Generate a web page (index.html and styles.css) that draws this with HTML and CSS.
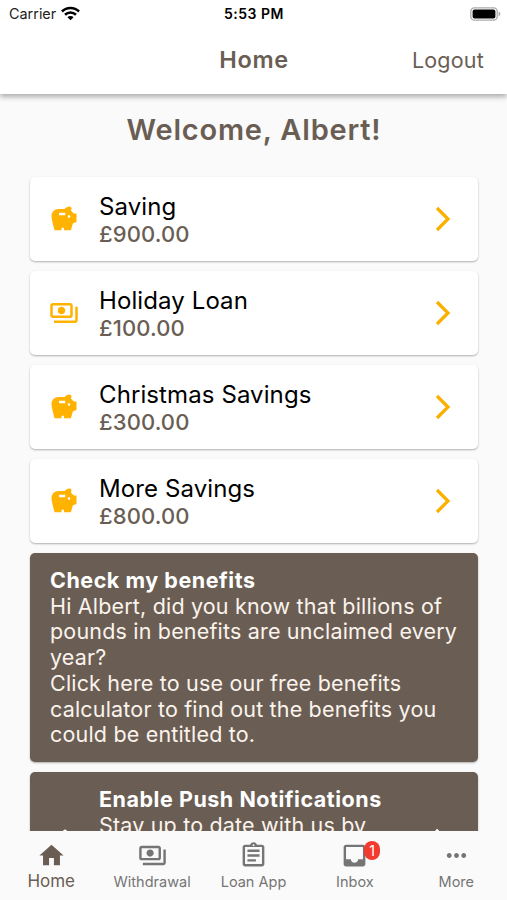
FILE: index.html
```html
<!DOCTYPE html>
<html lang="en">
<head>
<meta charset="utf-8">
<title>Home</title>
<link rel="stylesheet" href="styles.css">
</head>
<body>
<svg class="defs" aria-hidden="true">
  <symbol id="savings" viewBox="0 0 24 24"><path d="M19.83 7.5l-2.27-2.27c.07-.42.18-.81.32-1.15.08-.18.12-.37.12-.58 0-.83-.67-1.5-1.5-1.5-1.64 0-3.09.79-4 2h-5C4.46 4 2 6.46 2 9.5S4.5 21 4.5 21H10v-2h2v2h5.5l1.68-5.59 2.82-.94V7.5h-2.17zM13 9H8V7h5v2zm3 2c-.55 0-1-.45-1-1s.45-1 1-1 1 .45 1 1-.45 1-1 1z"/></symbol>
  <symbol id="payments" viewBox="0 0 24 24"><path d="M19 14V6c0-1.1-.9-2-2-2H3c-1.1 0-2 .9-2 2v8c0 1.1.9 2 2 2h14c1.1 0 2-.9 2-2zm-2 0H3V6h14v8zm-7-7c-1.66 0-3 1.34-3 3s1.34 3 3 3 3-1.34 3-3-1.34-3-3-3zm13 0v11c0 1.1-.9 2-2 2H4v-2h17V7h2z"/></symbol>
  <symbol id="chevron" viewBox="0 0 16 26"><path d="M2 2l11 11L2 24" fill="none" stroke="currentColor" stroke-width="3.2"/></symbol>
</svg>
<div class="phone">
  <header class="appbar">
    <div class="status">
      <div class="carrier"><span>Carrier</span>
        <svg class="wifi" viewBox="0 0 18 14" fill="none" stroke="#000" stroke-width="2.4"><path d="M.9 5.1a11.5 11.5 0 0 1 16.2 0M3.8 8.2a7.4 7.4 0 0 1 10.4 0"/><path d="M9 13.5L6.1 10.6a4.1 4.1 0 0 1 5.8 0z" fill="#000" stroke="none"/></svg>
      </div>
      <div class="time">5:53 PM</div>
      <svg class="battery" viewBox="0 0 31 14"><rect x=".8" y=".8" width="26.4" height="12.4" rx="3.6" fill="#fff" stroke="#aaa" stroke-width="1.3"/><rect x="2.6" y="2.5" width="22.8" height="9" rx="2" fill="#000"/><path d="M28.6 4.6c2.4 1 2.4 3.8 0 4.8z" fill="#aaa"/></svg>
    </div>
    <div class="toolbar"><span></span><h1>Home</h1><a class="logout">Logout</a></div>
  </header>
  <main class="content">
    <h2>Welcome, Albert!</h2>
    <section class="card account"><svg class="icon"><use href="#savings"/></svg><div class="info"><div class="name">Saving</div><div class="amount">£900.00</div></div><svg class="chevron"><use href="#chevron"/></svg></section>
    <section class="card account"><svg class="icon"><use href="#payments"/></svg><div class="info"><div class="name">Holiday Loan</div><div class="amount">£100.00</div></div><svg class="chevron"><use href="#chevron"/></svg></section>
    <section class="card account"><svg class="icon"><use href="#savings"/></svg><div class="info"><div class="name">Christmas Savings</div><div class="amount">£300.00</div></div><svg class="chevron"><use href="#chevron"/></svg></section>
    <section class="card account"><svg class="icon"><use href="#savings"/></svg><div class="info"><div class="name">More Savings</div><div class="amount">£800.00</div></div><svg class="chevron"><use href="#chevron"/></svg></section>
    <section class="card notice">
      <h3>Check my benefits</h3>
      <p>Hi Albert, did you know that billions of<br>pounds in benefits are unclaimed every<br>year?<br>Click here to use our free benefits<br>calculator to find out the benefits you<br>could be entitled to.</p>
    </section>
    <section class="card notice push">
      <svg class="bell" viewBox="0 0 30 30"><circle cx="15" cy="2.5" r="2"/></svg>
      <div class="pushtext"><h3>Enable Push Notifications</h3><p>Stay up to date with us by</p></div>
      <svg class="chevron light"><use href="#chevron"/></svg>
    </section>
  </main>
  <nav class="tabs">
    <a class="tab active"><svg viewBox="0 0 24 24"><path d="M10 20v-6h4v6h5v-8h3L12 3 2 12h3v8z"/></svg><span>Home</span></a>
    <a class="tab"><svg viewBox="0 0 24 24"><use href="#payments"/></svg><span>Withdrawal</span></a>
    <a class="tab"><svg viewBox="0 0 24 24"><path d="M7 15h7v2H7zm0-4h10v2H7zm0-4h10v2H7zm12-4h-4.18C14.4 1.84 13.3 1 12 1s-2.4.84-2.82 2H5c-1.1 0-2 .9-2 2v14c0 1.1.9 2 2 2h14c1.1 0 2-.9 2-2V5c0-1.1-.9-2-2-2zm-7-.25c.41 0 .75.34.75.75s-.34.75-.75.75-.75-.34-.75-.75.34-.75.75-.75zM19 19H5V5h14v14z"/></svg><span>Loan App</span></a>
    <a class="tab"><svg viewBox="0 0 24 24"><path d="M19 3H4.99c-1.11 0-1.98.89-1.98 2L3 19c0 1.1.88 2 1.99 2H19c1.1 0 2-.9 2-2V5c0-1.11-.9-2-2-2zm0 12h-4c0 1.66-1.35 3-3 3s-3-1.34-3-3H4.99V5H19v10z"/></svg><span>Inbox</span><b class="badge">1</b></a>
    <a class="tab"><svg viewBox="0 0 24 24"><path d="M6 10c-1.1 0-2 .9-2 2s.9 2 2 2 2-.9 2-2-.9-2-2-2zm12 0c-1.1 0-2 .9-2 2s.9 2 2 2 2-.9 2-2-.9-2-2-2zm-6 0c-1.1 0-2 .9-2 2s.9 2 2 2 2-.9 2-2-.9-2-2-2z"/></svg><span>More</span></a>
  </nav>
</div>
</body>
</html>
```
FILE: styles.css
```css
* { box-sizing: border-box; }
body { margin: 0; background: #fafafa; font-family: Inter, "Liberation Sans", sans-serif; color: #6a5e54; }
h1, h2, h3, p { margin: 0; }
.defs { display: none; }
.phone { height: 900px; display: flex; flex-direction: column; overflow: hidden; }
.appbar { position: relative; z-index: 1; flex: none; height: 94px; background: #fff; box-shadow: 0 3px 5px rgba(0,0,0,.3); }
.status { height: 27px; padding: 0 6px 0 9px; display: grid; grid-template-columns: 1fr auto 1fr; align-items: center; color: #000; }
.carrier { display: flex; align-items: center; gap: 5px; font-size: 14.4px; color: #222; }
.wifi { width: 19px; height: 15px; }
.time { font-size: 14px; font-weight: 600; letter-spacing: .5px; margin-right: 2px; }
.battery { width: 31px; height: 14px; justify-self: end; }
.toolbar { height: 65px; padding: 0 23px; display: grid; grid-template-columns: 1fr auto 1fr; align-items: center; }
h1 { font-size: 23.5px; font-weight: 600; letter-spacing: .7px; margin-right: -1px; }
.logout { justify-self: end; font-size: 21.5px; letter-spacing: .2px; }
.content { flex: 1; min-height: 0; overflow: hidden; padding: 17px 29px 0 30px; display: flex; flex-direction: column; gap: 10px; }
h2 { flex: none; height: 56px; line-height: 38px; font-size: 29px; font-weight: 600; letter-spacing: .8px; text-align: center; }
.card { flex: none; border-radius: 5px; box-shadow: 0 1px 2px rgba(0,0,0,.3); }
.account { height: 84px; padding: 0 27px 0 20px; display: flex; align-items: center; background: #fff; }
.icon { width: 30px; height: 30px; margin-left: -1px; fill: #ffb300; }
.info { flex: 1; margin-left: 20px; padding-top: 3px; line-height: 28px; }
.name { color: #000; font-size: 24px; letter-spacing: .1px; }
.amount { margin-top: -1px; padding-bottom: 1px; font-size: 22px; font-weight: 500; letter-spacing: .1px; }
.chevron { width: 16px; height: 26px; color: #fbb000; }
.notice { height: 209px; padding: 15px 20px; background: #6a5e54; color: #fbf3ec; font-size: 21.5px; line-height: 25.7px; letter-spacing: .18px; white-space: nowrap; }
h3 { font-size: 21.5px; font-weight: 700; letter-spacing: .53px; color: #fff; }
.push { display: flex; }
.bell { width: 30px; height: 30px; margin: 42px 0 0; fill: #fff; }
.pushtext { flex: 1; margin-left: 19px; }
.light { margin: 41px 8px 0 0; color: #fff; }
.tabs { flex: none; height: 69px; display: grid; grid-template-columns: repeat(5, 1fr); background: #fafafa; }
.tab { position: relative; display: flex; flex-direction: column; align-items: center; padding-top: 10px; color: #757575; font-size: 14.5px; line-height: 20px; }
.tab svg { width: 29px; height: 29px; fill: currentColor; }
.tab span { margin-top: 2px; }
.tab.active { color: #6a5e54; padding-left: 1px; }
.tab.active span { font-size: 17px; margin-top: 1px; }
.badge { position: absolute; left: 60px; top: 10px; width: 16px; height: 19px; border-radius: 8px; background: #f23b2f; color: #fff; font-size: 14px; font-weight: 400; line-height: 19px; text-align: center; }
```
